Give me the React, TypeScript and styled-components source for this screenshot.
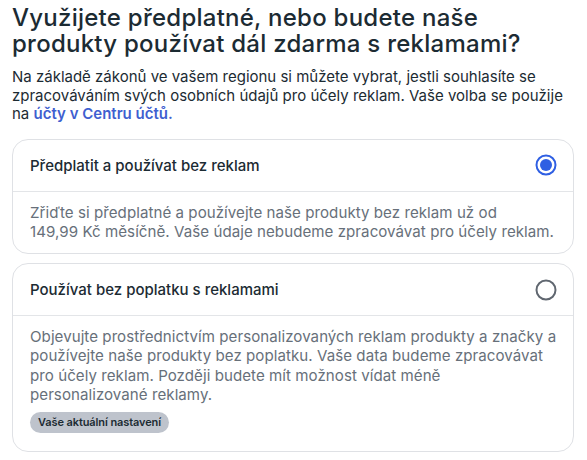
import React from "react";
import styled, { createGlobalStyle } from "styled-components";

const Global = createGlobalStyle`
  html, body { margin: 0; padding: 0; background: #fff; }
  body { font-family: Inter, "Noto Sans", sans-serif; color: #1c2b33; -webkit-font-smoothing: antialiased; }
`;

const Page = styled.div`
  padding: 5px 13px 0 12px;
  width: 587px;
  box-sizing: border-box;
`;

const Title = styled.h1`
  margin: 0;
  font-size: 24px;
  line-height: 26px;
  font-weight: 500;
  letter-spacing: 0.25px;
  color: #1c2b33;
`;

const Intro = styled.p`
  margin: 11px 0 0;
  font-size: 15px;
  line-height: 18.5px;
  color: #1c2b33;
`;

const Link = styled.a`
  color: #3f5fd0;
  font-weight: 600;
  text-decoration: none;
`;

const Options = styled.div`
  margin-top: 15px;
  display: flex;
  flex-direction: column;
  gap: 9px;
`;

const Card = styled.div`
  border: 1px solid #dfe1e5;
  border-radius: 16px;
  overflow: hidden;
  background: #fff;
`;

const CardHeader = styled.div`
  height: 51px;
  display: flex;
  align-items: center;
  justify-content: space-between;
  padding: 0 16px 0 17px;
  border-bottom: 1px solid #e3e5e8;
`;

const CardTitle = styled.span`
  font-size: 15px;
  font-weight: 500;
  color: #1c2b33;
`;

const CardBody = styled.div<{ $bottom: number }>`
  padding: 11px 12px ${(p) => p.$bottom}px 17px;
  font-size: 15.1px;
  line-height: 19.3px;
  letter-spacing: 0.05px;
  color: #67707a;
`;

const Badge = styled.span`
  display: inline-flex;
  align-items: center;
  margin-top: 8px;
  height: 21px;
  padding: 0 8px;
  border-radius: 11px;
  background: #bec3cc;
  color: #1c2b33;
  font-size: 11px;
  font-weight: 600;
  letter-spacing: -0.1px;
`;

const Radio = ({ checked }: { checked: boolean }) => (
  <svg width="22" height="22" viewBox="0 0 22 22">
    <circle
      cx="11"
      cy="11"
      r="9.5"
      fill="none"
      stroke={checked ? "#2f5fe3" : "#606770"}
      strokeWidth="2"
    />
    {checked && <circle cx="11" cy="11" r="6" fill="#2f5fe3" />}
  </svg>
);

export default function App() {
  return (
    <Page>
      <Global />
      <Title>
        Využijete předplatné, nebo budete naše produkty používat dál zdarma s
        reklamami?
      </Title>
      <Intro>
        Na základě zákonů ve vašem regionu si můžete vybrat, jestli souhlasíte se
        zpracováváním svých osobních údajů pro účely reklam. Vaše volba se
        použije na <Link href="#">účty v Centru účtů.</Link>
      </Intro>
      <Options>
        <Card>
          <CardHeader>
            <CardTitle>Předplatit a používat bez reklam</CardTitle>
            <Radio checked />
          </CardHeader>
          <CardBody $bottom={12}>
            Zřiďte si předplatné a používejte naše produkty bez reklam už od
            149,99{"\u00a0"}Kč měsíčně. Vaše údaje nebudeme zpracovávat pro účely
            reklam.
          </CardBody>
        </Card>
        <Card>
          <CardHeader>
            <CardTitle>Používat bez poplatku s reklamami</CardTitle>
            <Radio checked={false} />
          </CardHeader>
          <CardBody $bottom={18}>
            Objevujte prostřednictvím personalizovaných reklam produkty a značky a
            používejte naše produkty bez poplatku. Vaše data budeme zpracovávat
            pro účely reklam. Později budete mít možnost vídat méně
            personalizované reklamy.
            <div>
              <Badge>Vaše aktuální nastavení</Badge>
            </div>
          </CardBody>
        </Card>
      </Options>
    </Page>
  );
}
